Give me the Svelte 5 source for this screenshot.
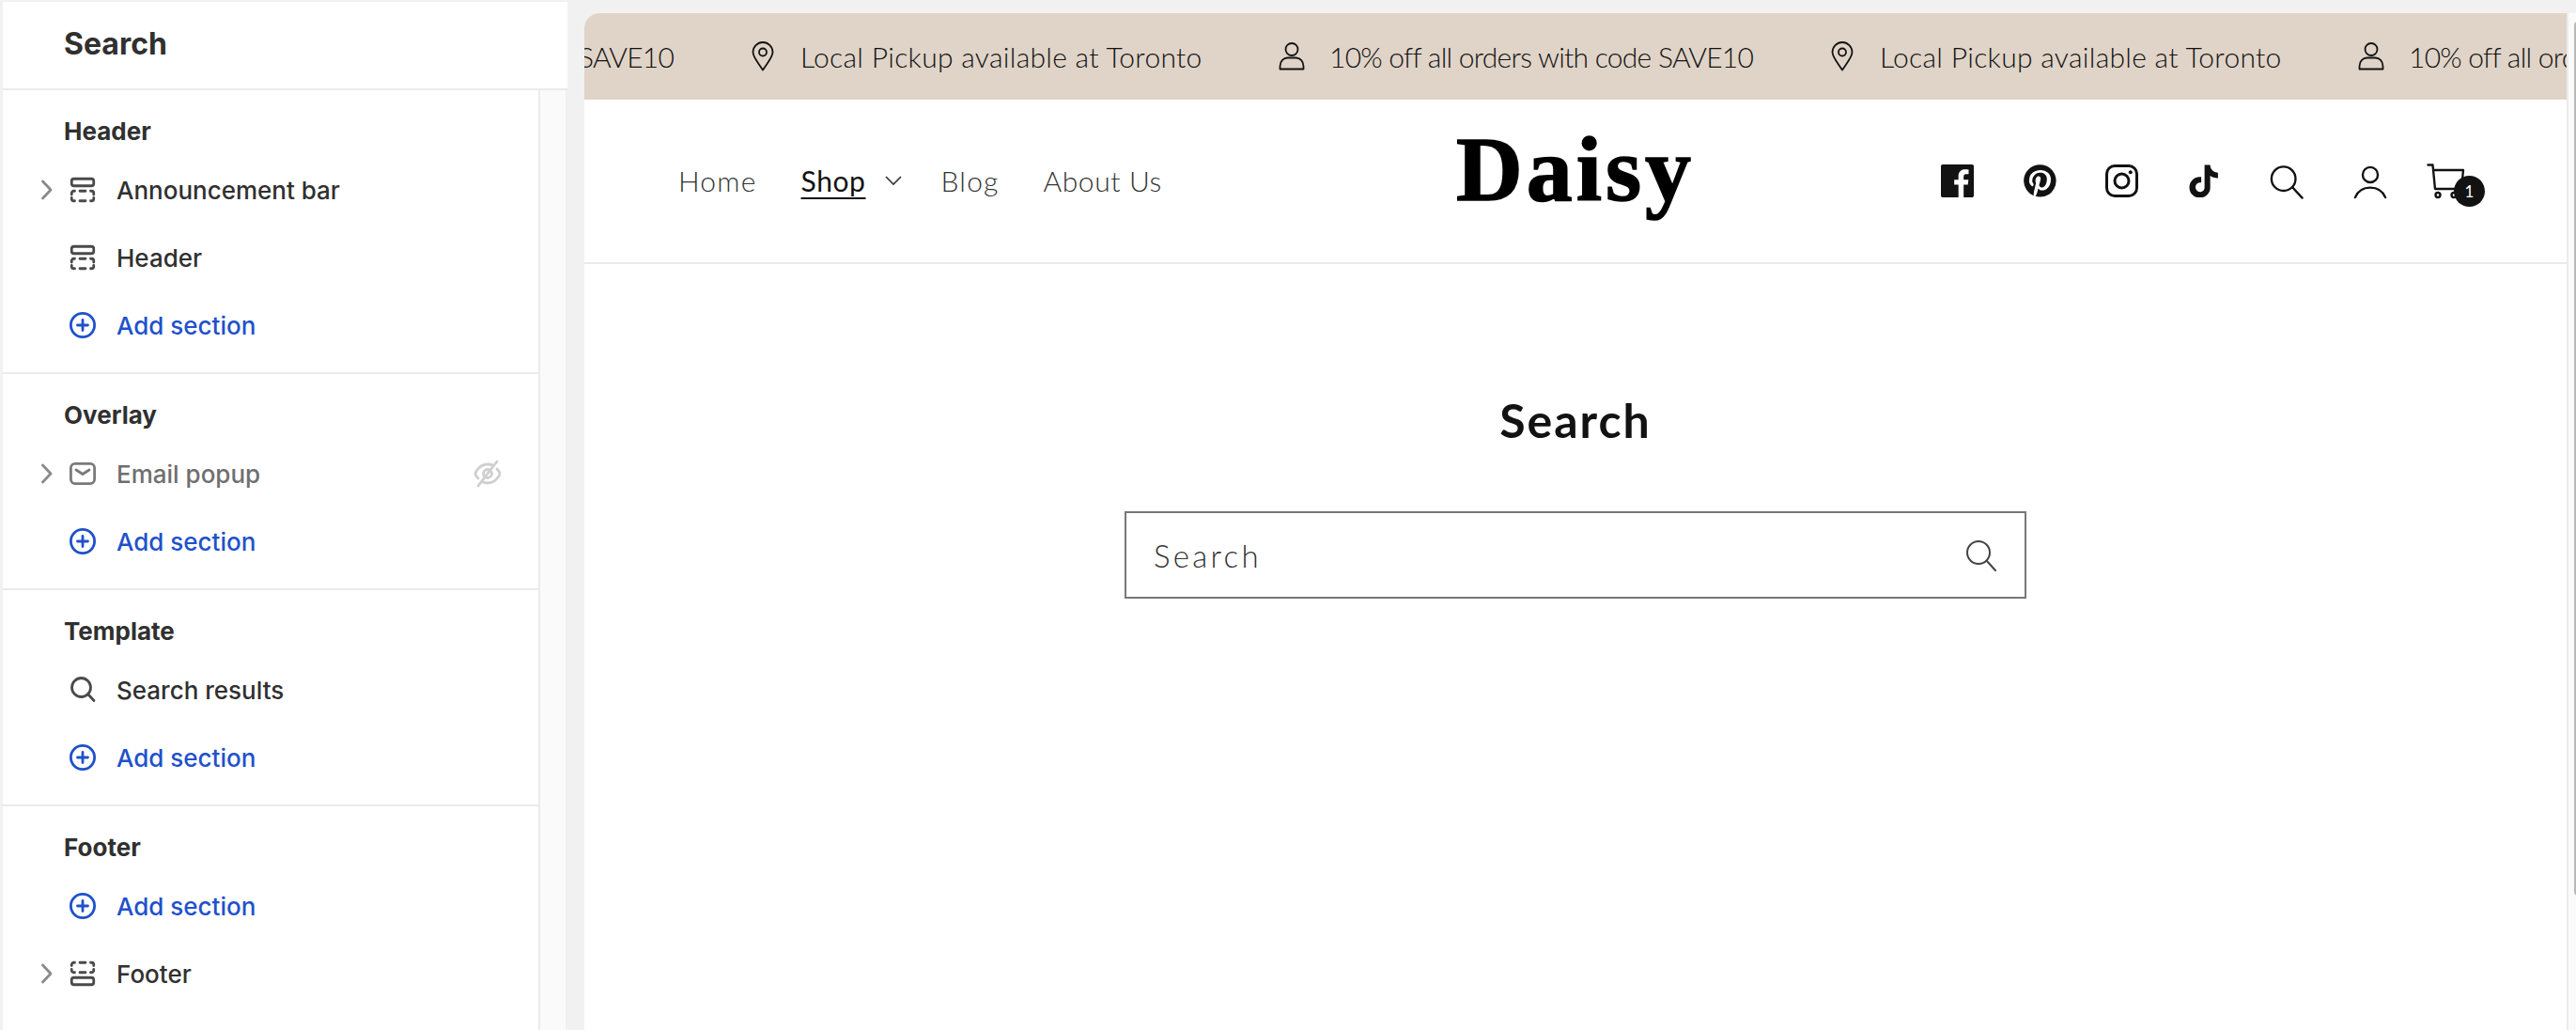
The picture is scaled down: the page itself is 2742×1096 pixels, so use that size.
<script>
  const groups = [
    {
      title: 'Header',
      rows: [
        { label: 'Announcement bar', icon: 'top', chevron: true },
        { label: 'Header', icon: 'top' },
        { add: true }
      ]
    },
    {
      title: 'Overlay',
      rows: [{ label: 'Email popup', icon: 'mail', chevron: true, hidden: true }, { add: true }]
    },
    {
      title: 'Template',
      rows: [{ label: 'Search results', icon: 'search' }, { add: true }]
    },
    {
      title: 'Footer',
      rows: [{ add: true }, { label: 'Footer', icon: 'bottom', chevron: true }]
    }
  ];

  const offer = '10% off all orders with code SAVE10';
  const pickup = 'Local Pickup available at Toronto';
  const messages = [
    { text: offer, icon: 'person' },
    { text: pickup, icon: 'pin' },
    { text: offer, icon: 'person' },
    { text: pickup, icon: 'pin' },
    { text: offer, icon: 'person' }
  ];
</script>

<div class="app">
  <aside class="sidebar">
    <div class="side-title">Search</div>
    <div class="side-body">
      <div class="list">
        {#each groups as group}
          <section class="group">
            <h3>{group.title}</h3>
            {#each group.rows as row}
              <div class="row" class:add={row.add} class:muted={row.hidden}>
                <span class="chev">
                  {#if row.chevron}
                    <svg width="14" height="22" viewBox="0 0 14 22" fill="none" stroke="#8a8a8a" stroke-width="2.8" stroke-linecap="round" stroke-linejoin="round">
                      <path d="M2.5 2l8.5 9-8.5 9" />
                    </svg>
                  {/if}
                </span>
                <span class="ico">
                  {#if row.add}
                    <svg width="32" height="32" viewBox="0 0 32 32" fill="none" stroke="#1f51cc" stroke-width="2.8" stroke-linecap="round">
                      <circle cx="16" cy="16" r="12.6" />
                      <path d="M16 10.5v11M10.5 16h11" />
                    </svg>
                  {:else if row.icon === 'top'}
                    <svg width="32" height="32" viewBox="0 0 32 32" fill="none" stroke="#4a4a4a" stroke-width="2.8" stroke-linecap="round">
                      <rect x="4.25" y="4.25" width="23.5" height="7.5" rx="2.5" />
                      <path d="M4.25 21v-1.5a2.25 2.25 0 0 1 2.25-2.25h1M13 17.25h6M24.5 17.25h1a2.25 2.25 0 0 1 2.25 2.25V21M27.75 24.5v1a2.25 2.25 0 0 1-2.25 2.25h-1M19 27.75h-6M7.5 27.75h-1a2.25 2.25 0 0 1-2.25-2.25v-1" />
                    </svg>
                  {:else if row.icon === 'bottom'}
                    <svg width="32" height="32" viewBox="0 0 32 32" fill="none" stroke="#4a4a4a" stroke-width="2.8" stroke-linecap="round">
                      <rect x="4.25" y="20.25" width="23.5" height="7.5" rx="2.5" />
                      <path d="M4.25 7.5V6.5a2.25 2.25 0 0 1 2.25-2.25h1M13 4.25h6M24.5 4.25h1a2.25 2.25 0 0 1 2.25 2.25v1M27.75 11.5v1a2.25 2.25 0 0 1-2.25 2.25h-1M19 14.75h-6M7.5 14.75h-1a2.25 2.25 0 0 1-2.25-2.25v-1" />
                    </svg>
                  {:else if row.icon === 'mail'}
                    <svg width="32" height="32" viewBox="0 0 32 32" fill="none" stroke="#7a7a7a" stroke-width="2.8" stroke-linecap="round" stroke-linejoin="round">
                      <rect x="3.4" y="5.4" width="25.2" height="21.2" rx="4.5" />
                      <path d="M9 12l7 4.500 7-4.500" />
                    </svg>
                  {:else if row.icon === 'search'}
                    <svg width="32" height="32" viewBox="0 0 32 32" fill="none" stroke="#4a4a4a" stroke-width="2.8" stroke-linecap="round">
                      <circle cx="14.5" cy="13.5" r="10" />
                      <path d="M22 21l6 6.5" />
                    </svg>
                  {/if}
                </span>
                <span class="label">{row.add ? 'Add section' : row.label}</span>
                {#if row.hidden}
                  <svg class="eye" width="32" height="32" viewBox="0 0 32 32" fill="none" stroke="#cfcfcf" stroke-width="2.8" stroke-linecap="round" stroke-linejoin="round">
                    <path d="M6 21c-2-2-3-4-3-5 0-2 5-10 13-10 2 0 4 .5 5.5 1.3M26 11c2 2 3 4 3 5 0 2-5 10-13 10-2 0-4-.5-5.5-1.3" />
                    <path d="M12 18a4.5 4.5 0 0 1 6-6M20 14a4.5 4.5 0 0 1-6 6" />
                    <path d="M26 3L6 29" />
                  </svg>
                {/if}
              </div>
            {/each}
          </section>
        {/each}
      </div>
      <div class="gutter"></div>
    </div>
  </aside>

  <main class="preview">
    <div class="announce">
      <div class="track">
        {#each messages as msg}
          <div class="msg">
            <span class="msg-icon">
              {#if msg.icon === 'pin'}
                <svg class="pin" width="32" height="32" viewBox="0 0 32 32" fill="none" stroke="#121212" stroke-width="1.8" stroke-linejoin="round">
                  <path d="M16 30.5C12 24 5.5 17 5.5 11.5a10.5 10.5 0 0 1 21 0C26.500 17 20 24 16 30.500z" />
                  <circle cx="16" cy="11.5" r="4" />
                </svg>
              {:else}
                <svg class="person" width="32" height="32" viewBox="0 0 32 32" fill="none" stroke="#121212" stroke-width="1.8" stroke-linejoin="round">
                  <circle cx="16" cy="8.500" r="6.500" />
                  <path d="M3.500 29.500v-3c0-5.500 4-9 8-9h9c4 0 8 3.500 8 9v3z" />
                </svg>
              {/if}
            </span>
            <span class="msg-text" class:long={msg.text === offer}>{msg.text}</span>
          </div>
        {/each}
      </div>
    </div>

    <header class="store-head">
      <nav class="nav">
        <a href="#home">Home</a>
        <a href="#shop" class="current">Shop</a>
        <svg class="caret" width="20" height="12" viewBox="0 0 20 12" fill="none" stroke="#333" stroke-width="1.6">
          <path d="M2 2l8 8 8-8" />
        </svg>
        <a href="#blog">Blog</a>
        <a href="#about" class="about">About Us</a>
      </nav>
      <div class="logo">Daisy</div>
      <div class="head-icons">
        <svg class="social" width="35" height="35" viewBox="0 0 17.4 17.4" fill="#121212">
          <path d="M16.42.61c.27 0 .5.1.69.28.19.2.28.42.28.7v15.44c0 .27-.1.5-.28.69a.94.94 0 01-.7.28h-4.39v-6.7h2.25l.31-2.65h-2.56v-1.7c0-.4.1-.72.28-.93.18-.2.5-.32 1-.32h1.37V3.35c-.6-.06-1.27-.1-2.03-.1-1.01 0-1.83.3-2.45.9-.62.6-.93 1.44-.93 2.53v1.97H7.04v2.65h2.24V18H.98c-.28 0-.5-.1-.7-.28a.94.94 0 01-.28-.7V1.59c0-.27.1-.5.28-.69a.94.94 0 01.7-.28h15.44z" transform="translate(0 -.6)" />
        </svg>
        <svg class="social" width="35" height="35" viewBox="0 .5 17 17" fill="#121212">
          <path d="M8.48.58a8.42 8.42 0 015.9 2.45 8.42 8.42 0 011.33 10.08 8.28 8.28 0 01-7.23 4.16 8.5 8.5 0 01-2.37-.32c.42-.68.7-1.29.85-1.8l.59-2.29c.14.28.41.52.8.73.4.2.8.31 1.24.31.87 0 1.65-.25 2.34-.75a4.87 4.87 0 001.6-2.05 7.3 7.3 0 00.56-2.93c0-1.3-.5-2.41-1.49-3.36a5.27 5.27 0 00-3.8-1.43c-.93 0-1.8.16-2.58.48A5.23 5.23 0 002.85 8.6c0 .75.14 1.41.43 1.98.28.56.7.96 1.27 1.2.1.04.19.04.26 0 .07-.03.12-.1.15-.2l.18-.68c.05-.15.02-.3-.11-.45a2.35 2.35 0 01-.57-1.63A3.96 3.96 0 018.6 4.8c1.09 0 1.94.3 2.54.89.61.6.92 1.37.92 2.32 0 .8-.11 1.54-.33 2.21a3.97 3.97 0 01-.93 1.62c-.4.4-.87.6-1.4.6-.43 0-.78-.15-1.06-.47-.27-.32-.36-.7-.26-1.13a111.14 111.14 0 01.47-1.6l.18-.73c.06-.26.09-.47.09-.65 0-.36-.1-.66-.28-.89-.2-.23-.47-.35-.83-.35-.45 0-.83.2-1.13.62-.3.41-.46.93-.46 1.56a4.1 4.1 0 00.25 1.37l-.97 4.12c-.17.67-.22 1.45-.17 2.34A8.38 8.38 0 01.06 8.98 8.42 8.42 0 018.48.58z" />
        </svg>
        <svg class="social" width="35" height="35" viewBox="0 0 35 35" fill="none" stroke="#121212" stroke-width="3">
          <rect x="1.500" y="1.500" width="32" height="32" rx="8.500" />
          <circle cx="17.500" cy="17.500" r="7.500" />
          <circle cx="26.800" cy="8.200" r="2" fill="#121212" stroke="none" />
        </svg>
        <svg class="social tiktok" width="35" height="35" viewBox="2 1.500 16 16" fill="#121212">
          <path d="M10.511 1.705h2.74s-.157 3.51 3.795 3.768v2.711s-2.114.129-3.796-1.158l.028 5.606a5.073 5.073 0 11-5.079-5.062h.711v2.772a2.273 2.273 0 00-2.84 2.2 2.315 2.315 0 002.957 2.265 2.31 2.31 0 001.484-2.27z" />
        </svg>
        <svg class="tool" width="36" height="36" viewBox="0 0 38 38" fill="none" stroke="#121212" stroke-width="2.500" stroke-linecap="round">
          <circle cx="15.500" cy="15" r="13.500" />
          <path d="M25.500 24.500l11 12" />
        </svg>
        <svg class="tool" width="36" height="36" viewBox="0 0 38 38" fill="none" stroke="#121212" stroke-width="2.500" stroke-linecap="round">
          <circle cx="19" cy="10.500" r="8.500" />
          <path d="M2 36c3-7 9.500-11 17-11s14 4 17 11" />
        </svg>
        <span class="cart">
          <svg width="44" height="38" viewBox="0 0 44 38" fill="none" stroke="#121212" stroke-width="2.400" stroke-linecap="round" stroke-linejoin="round">
            <path d="M1.500 1.500h5l2.500 25.500h27M7 7h32l-1.500 15" />
            <circle cx="12" cy="33.500" r="2.500" />
            <circle cx="29" cy="33.500" r="2.500" />
          </svg>
          <span class="badge">1</span>
        </span>
      </div>
    </header>

    <section class="search-page">
      <h1>Search</h1>
      <div class="field">
        <span class="placeholder">Search</span>
        <svg width="36" height="36" viewBox="0 0 36 36" fill="none" stroke="#444" stroke-width="2" stroke-linecap="round">
          <circle cx="15" cy="15" r="12" />
          <path d="M24 24l9 10" />
        </svg>
      </div>
    </section>
  </main>

  <div class="rail"><div class="thumb"></div></div>
</div>

<style>
  :global(body) {
    margin: 0;
    background: #f1f1f1;
  }

  .app {
    display: flex;
    height: 1096px;
    overflow: hidden;
    background: #f1f1f1;
    color: #303030;
    font-family: Inter, 'Liberation Sans', sans-serif;
  }

  .sidebar {
    flex: none;
    width: 601px;
    margin: 2px 0 0 3px;
    display: flex;
    flex-direction: column;
    background: #fff;
  }

  .side-title {
    box-sizing: border-box;
    height: 94px;
    padding: 26px 0 0 65px;
    border-bottom: 2px solid #ebebeb;
    font-size: 32px;
    line-height: 38px;
    font-weight: 650;
  }

  .side-body {
    flex: 1;
    display: flex;
    min-height: 0;
  }

  .list {
    box-sizing: border-box;
    width: 572px;
    border-right: 2px solid #ebebeb;
  }

  .gutter {
    flex: 1;
    background: #fafafa;
    border-right: 2px solid #f1f1f1;
  }

  .group {
    padding: 22px 0 14px;
    border-bottom: 2px solid #ebebeb;
  }

  .group:last-child {
    border-bottom: 0;
  }

  h3 {
    margin: 0 0 4px;
    padding-left: 65px;
    font-size: 26px;
    line-height: 44px;
    font-weight: 650;
  }

  .row {
    display: flex;
    align-items: center;
    height: 72px;
    padding: 0 38px 0 33px;
    font-size: 26px;
    font-weight: 500;
  }

  .row.add {
    color: #1f51cc;
    font-weight: 550;
  }

  .row.muted .label {
    color: #6f6f6f;
  }

  .chev {
    flex: none;
    width: 28px;
    display: flex;
    justify-content: center;
  }

  .ico {
    flex: none;
    width: 48px;
    margin-right: 12px;
    display: flex;
    justify-content: center;
  }

  svg {
    display: block;
  }

  .eye {
    margin-left: auto;
  }

  .preview {
    flex: none;
    width: 2110px;
    margin: 14px 0 0 18px;
    background: #fff;
    border-radius: 16px 0 0 0;
    overflow: hidden;
    display: flex;
    flex-direction: column;
  }

  .announce {
    height: 92px;
    background: #e0d4c8;
    overflow: hidden;
    display: flex;
    align-items: center;
  }

  .track {
    display: flex;
    gap: 80px;
    margin-left: -412px;
    color: #121212;
    font-family: Lato, sans-serif;
    font-weight: 300;
    font-size: 30px;
    white-space: nowrap;
  }

  .msg {
    flex: none;
    display: flex;
    align-items: center;
    gap: 24px;
  }

  .msg-icon {
    flex: none;
    width: 32px;
  }

  .msg-text {
    width: 427px;
    letter-spacing: 0.3px;
  }

  .msg-text.long {
    width: 450px;
    letter-spacing: -0.75px;
  }

  .store-head {
    box-sizing: border-box;
    height: 175px;
    border-bottom: 2px solid #ebebeb;
    display: grid;
    grid-template-columns: 1fr auto 1fr;
    align-items: center;
  }

  .nav {
    display: flex;
    align-items: center;
    padding: 0 0 2px 100px;
    font-family: Lato, sans-serif;
    font-weight: 300;
    font-size: 30px;
    letter-spacing: 1.2px;
    color: #333;
  }

  .nav a {
    color: inherit;
    text-decoration: none;
    margin-right: 47px;
  }

  .nav a.current {
    color: #121212;
    margin-right: 19px;
    font-weight: 400;
    letter-spacing: 0.6px;
    text-decoration: underline;
    text-underline-offset: 6px;
    text-decoration-thickness: 2px;
  }

  .nav a.about {
    letter-spacing: 0.6px;
  }

  .caret {
    margin-right: 41px;
  }

  .logo {
    margin-bottom: 26px;
    font-family: 'Liberation Serif', serif;
    font-weight: 700;
    font-size: 98px;
    line-height: 112px;
    letter-spacing: 4px;
    color: #000;
    -webkit-text-stroke: 1.5px #000;
  }

  .head-icons {
    display: flex;
    align-items: center;
    justify-content: flex-end;
    padding-right: 105px;
    gap: 52.5px;
  }

  .tiktok {
    margin-left: -1px;
    margin-right: 1px;
  }

  .tool {
    margin-top: 3px;
  }

  .cart {
    position: relative;
    margin-left: -10px;
  }

  .badge {
    position: absolute;
    left: 29px;
    top: 13px;
    width: 33px;
    height: 33px;
    border-radius: 50%;
    background: #121212;
    color: #fff;
    font-family: Lato, sans-serif;
    font-size: 17px;
    line-height: 33px;
    text-align: center;
  }

  .search-page {
    display: flex;
    flex-direction: column;
    align-items: center;
    padding-top: 136px;
    font-family: Lato, sans-serif;
  }

  h1 {
    margin: 0;
    font-size: 50px;
    line-height: 60px;
    font-weight: 700;
    letter-spacing: 2px;
    color: #121212;
  }

  .field {
    box-sizing: border-box;
    width: 960px;
    height: 93px;
    margin-top: 67px;
    border: 2px solid #777;
    display: flex;
    align-items: center;
    justify-content: space-between;
    padding: 0 28px 0 29px;
  }

  .placeholder {
    font-size: 33px;
    font-weight: 300;
    letter-spacing: 3.3px;
    color: #333;
  }

  .rail {
    flex: 1;
    margin-top: 14px;
    box-sizing: border-box;
    border-left: 2px solid #ebebeb;
    background: #fafafa;
    padding: 9px 0 0 6px;
  }

  .thumb {
    width: 8px;
    height: 930px;
    border-radius: 4px;
    background: #b8b8b8;
  }
</style>
